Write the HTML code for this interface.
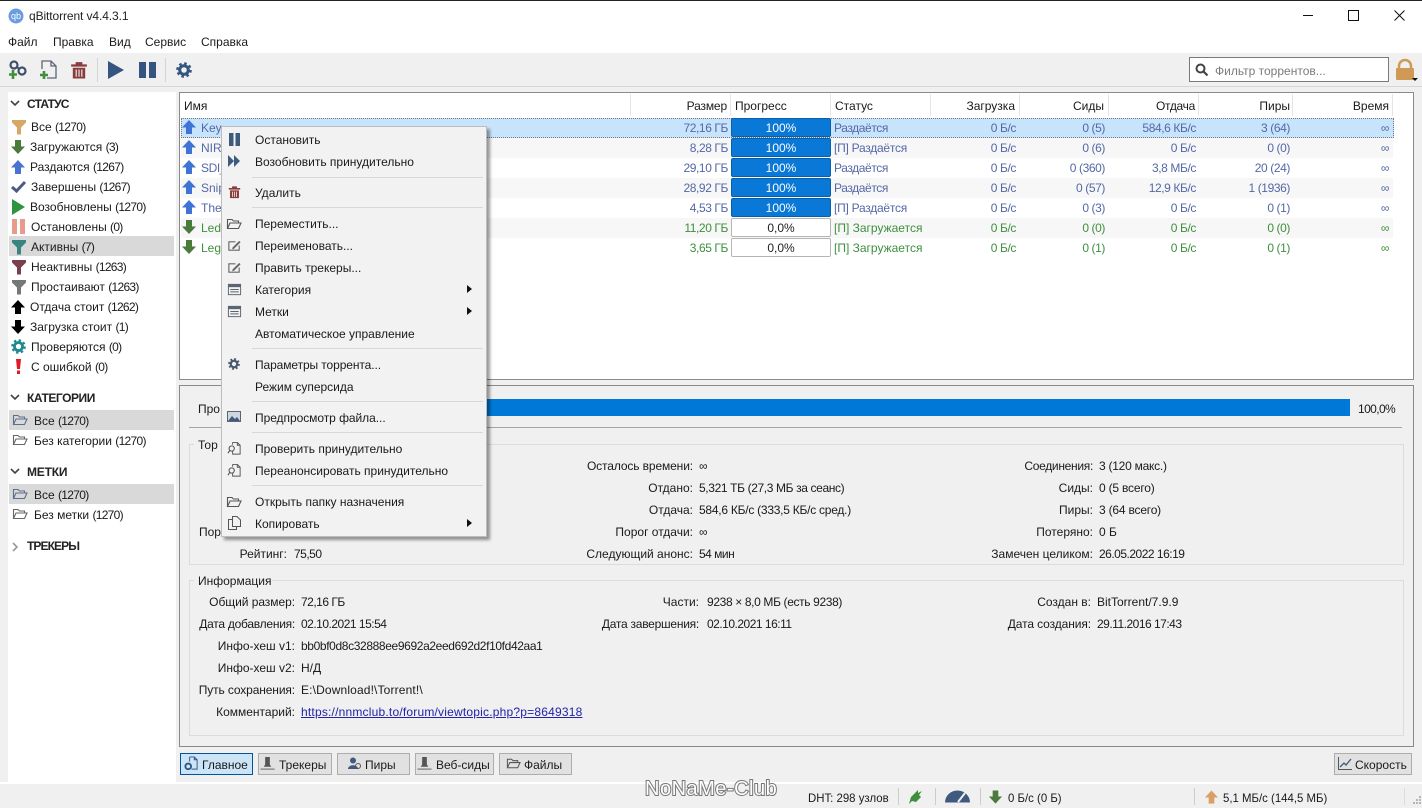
<!DOCTYPE html>
<html><head><meta charset="utf-8"><title>qBittorrent</title>
<style>
html,body{margin:0;padding:0;width:1422px;height:808px;overflow:hidden;background:#f0f0f0}
body{position:relative;font:12px/14px "Liberation Sans","Noto Sans CJK SC",sans-serif;color:#1a1a1a}
.b{position:absolute}
.t{position:absolute;white-space:nowrap;height:14px;line-height:14px}
.r{position:absolute;white-space:nowrap;height:14px;line-height:14px;text-align:right}
svg{position:absolute;overflow:visible}
.h{font-weight:bold;color:#222}
.u{color:#5468a6}.g{color:#3f8f3f}
.r.u,.r.g{letter-spacing:-.4px}
.n{letter-spacing:-.7px}
.d{letter-spacing:-.5px}
.sep{position:absolute;left:252px;width:231px;height:1px;background:#d8d8d8}
.btn{position:absolute;top:753px;height:20px;border:1px solid #adadad;background:#e1e1e1}
.p{position:absolute;left:731px;width:98px;height:17px;border:1px solid #0b5ea8;background:#0a78d7;color:#fff;text-align:center;line-height:18px;border-radius:2px}
.p0{position:absolute;left:731px;width:98px;height:17px;border:1px solid #b5b5b5;background:#fff;color:#222;text-align:center;line-height:18px;border-radius:2px}
</style></head><body>
<svg width="0" height="0" style="position:absolute"><defs>
<symbol id="up" viewBox="0 0 16 16"><path d="M8 1L15 8.5H11V15H5V8.5H1Z"/></symbol>
<symbol id="dn" viewBox="0 0 16 16"><path d="M8 15L15 7.5H11V1H5V7.5H1Z"/></symbol>
<symbol id="fl" viewBox="0 0 16 16"><path d="M1 1H15V3.5L10 8.5V15.500H6V8.500L1 3.500Z"/></symbol>
<symbol id="gr" viewBox="0 0 16 16"><circle cx="8" cy="8" r="4.300" fill="none" stroke="currentColor" stroke-width="3"/><circle cx="8" cy="8" r="6.500" fill="none" stroke="currentColor" stroke-width="2.600" stroke-dasharray="2.550 2.550"/></symbol>
<symbol id="fo" viewBox="0 0 16 16"><path d="M1.500 12.500V3.500H6L7.500 5H12.500V7M1.500 12.500L4 7H15L12.500 12.500Z" fill="none" stroke="currentColor" stroke-width="1.100"/></symbol>
<symbol id="tr" viewBox="0 0 16 16"><path d="M5 1H11V3H15V5H1V3H5ZM2.500 6H13.500V15.500H2.500Z"/><path d="M5.500 7.500V14M8 7.500V14M10.500 7.500V14" stroke="#f0f0f0" stroke-width="1"/></symbol>
<symbol id="ed" viewBox="0 0 16 16"><path d="M13 8V13H2V4H9" fill="none" stroke="#666" stroke-width="1.200"/><path d="M6 10L13 3L14.500 4.500L7.500 11.500L5.500 12Z" fill="#666"/></symbol>
<symbol id="ca" viewBox="0 0 16 16"><rect x="1.500" y="2.500" width="13" height="11" fill="none" stroke="#5a6472"/><rect x="1.500" y="2.500" width="13" height="3" fill="#5a6472"/><path d="M3.500 8H12.500M3.500 10.500H12.500" stroke="#5a6472"/></symbol>
<symbol id="ch" viewBox="0 0 16 16"><path d="M6 1.500H11L14 4.500V14H6V11M11 1.500V4.500H14M6 1.500V4" fill="none" stroke="#555" stroke-width="1"/><circle cx="5" cy="8" r="2.800" fill="none" stroke="#555" stroke-width="1.100"/><path d="M3 10L1 13" stroke="#555" stroke-width="1.200"/></symbol>
<symbol id="pin" viewBox="0 0 16 16"><path d="M5.500 1H10.500V9L12 11.500H4L5.500 9Z" fill="#555"/><path d="M0.500 14H15.500" stroke="#888" stroke-width="1.500"/></symbol>
</defs></svg>

<!-- title bar + menu -->
<div class="b" style="left:0;top:0;width:1422px;height:53px;background:#fff"></div>
<div class="b" style="left:0;top:0;width:1422px;height:1px;background:#222"></div>
<svg style="left:8px;top:8px" width="16" height="16" viewBox="0 0 16 16"><circle cx="8" cy="8" r="7.500" fill="#6a9de0"/><text x="8" y="11" font-size="9" fill="#fff" text-anchor="middle" font-family="Liberation Sans">qb</text></svg>
<div class="t" style="left:29px;top:9px;color:#222;letter-spacing:-.1px">qBittorrent v4.4.3.1</div>
<div class="b" style="left:1303px;top:15px;width:10px;height:1px;background:#111"></div>
<div class="b" style="left:1348px;top:10px;width:9px;height:9px;border:1px solid #111"></div>
<svg style="left:1394px;top:10px" width="11" height="11"><path d="M.5 .5L10.500 10.500M10.500 .5L.5 10.500" stroke="#111" fill="none"/></svg>
<div class="t" style="left:8px;top:35px">Файл</div>
<div class="t" style="left:53px;top:35px">Правка</div>
<div class="t" style="left:109px;top:35px">Вид</div>
<div class="t" style="left:145px;top:35px">Сервис</div>
<div class="t" style="left:201px;top:35px">Справка</div>

<!-- toolbar -->
<div class="b" style="left:0;top:86px;width:1422px;height:1px;background:#d6d6d6"></div>
<svg style="left:8px;top:60px" width="20" height="20" viewBox="0 0 20 20"><circle cx="6" cy="5" r="3.500" fill="none" stroke="#3c4f6b" stroke-width="2.200"/><circle cx="14" cy="11" r="3.500" fill="none" stroke="#3c4f6b" stroke-width="2.200"/><path d="M8 7L12 9" stroke="#3c4f6b" stroke-width="2"/><path d="M5 10V19M1 14.500H9" stroke="#3f8f3f" stroke-width="2.600"/></svg>
<svg style="left:40px;top:60px" width="18" height="20" viewBox="0 0 18 20"><path d="M2 9V1H11L16 6V18H7M11 1V6H16" fill="none" stroke="#5b6675" stroke-width="1.300"/><path d="M4 11V19M0 15H8" stroke="#3f8f3f" stroke-width="2.600"/></svg>
<svg style="left:70px;top:60px;fill:#8a3c3c" width="18" height="20"><use href="#tr"/></svg>
<div class="b" style="left:97px;top:58px;width:1px;height:24px;background:#d4d4d4"></div>
<svg style="left:108px;top:61px" width="16" height="18"><path d="M0 0L16 9L0 18Z" fill="#33557f"/></svg>
<svg style="left:139px;top:62px" width="17" height="16"><path d="M0 0H7V16H0ZM10 0H17V16H10Z" fill="#33557f"/></svg>
<div class="b" style="left:165px;top:58px;width:1px;height:24px;background:#d4d4d4"></div>
<svg style="left:176px;top:62px;color:#33557f" width="16" height="16"><use href="#gr"/></svg>
<div class="b" style="left:1189px;top:57px;width:198px;height:23px;border:1px solid #7a7a7a;background:#fff"></div>
<svg style="left:1195px;top:63px" width="13" height="13"><circle cx="5.500" cy="5.500" r="4" fill="none" stroke="#444" stroke-width="2"/><path d="M8.500 8.500L12.500 12.500" stroke="#444" stroke-width="2.200"/></svg>
<div class="t" style="left:1215px;top:64px;color:#7b7b7b">Фильтр торрентов...</div>
<svg style="left:1395px;top:59px" width="24" height="24"><path d="M4 9V7A6 6 0 0 1 16 7V9" fill="none" stroke="#cf9a55" stroke-width="2.500"/><rect x="1" y="9" width="18" height="12" rx="1" fill="#cf9a55"/><path d="M17 19H23L20 22Z" fill="#111"/></svg>

<!-- left panel -->
<div class="b" style="left:8px;top:92px;width:168px;height:691px;background:#fff"></div>
<div class="b" style="left:9px;top:236px;width:165px;height:20px;background:#d9d9d9"></div>
<div class="b" style="left:9px;top:410px;width:165px;height:20px;background:#d9d9d9"></div>
<div class="b" style="left:9px;top:484px;width:165px;height:20px;background:#d9d9d9"></div>
<svg style="left:10px;top:100px" width="10" height="7"><path d="M1 1L5 5L9 1" fill="none" stroke="#444" stroke-width="1.600"/></svg>
<div class="t h" style="left:27px;top:97px;letter-spacing:-.8px">СТАТУС</div>
<svg style="left:11px;top:119px;fill:#d5a866" width="16" height="16"><use href="#fl"/></svg><div class="t" style="left:31px;top:120px">Все <span class="n">(1270)</span></div>
<svg style="left:10px;top:139px;fill:#4a7a3c" width="16" height="16"><use href="#dn"/></svg><div class="t" style="left:30px;top:140px">Загружаются <span class="n">(3)</span></div>
<svg style="left:10px;top:159px;fill:#4a72d0" width="16" height="16"><use href="#up"/></svg><div class="t" style="left:30px;top:160px">Раздаются <span class="n">(1267)</span></div>
<svg style="left:11px;top:180px" width="15" height="13"><path d="M1 7L5.500 11L14 2" fill="none" stroke="#4f5a85" stroke-width="3"/></svg><div class="t" style="left:31px;top:180px">Завершены <span class="n">(1267)</span></div>
<svg style="left:12px;top:199px" width="13" height="16"><path d="M0 0L13 8L0 16Z" fill="#2f9440"/></svg><div class="t" style="left:30px;top:200px">Возобновлены <span class="n">(1270)</span></div>
<svg style="left:12px;top:219px" width="13" height="15"><path d="M0 0H5V15H0ZM8 0H13V15H8Z" fill="#ea9a8c"/></svg><div class="t" style="left:31px;top:220px">Остановлены <span class="n">(0)</span></div>
<svg style="left:11px;top:239px;fill:#3a8480" width="16" height="16"><use href="#fl"/></svg><div class="t" style="left:31px;top:240px">Активны <span class="n">(7)</span></div>
<svg style="left:11px;top:259px;fill:#7a3f4a" width="16" height="16"><use href="#fl"/></svg><div class="t" style="left:31px;top:260px">Неактивны <span class="n">(1263)</span></div>
<svg style="left:11px;top:279px;fill:#777" width="16" height="16"><use href="#fl"/></svg><div class="t" style="left:31px;top:280px">Простаивают <span class="n">(1263)</span></div>
<svg style="left:10px;top:299px;fill:#000" width="16" height="16"><use href="#up"/></svg><div class="t" style="left:30px;top:300px">Отдача стоит <span class="n">(1262)</span></div>
<svg style="left:10px;top:319px;fill:#000" width="16" height="16"><use href="#dn"/></svg><div class="t" style="left:30px;top:320px">Загрузка стоит <span class="n">(1)</span></div>
<svg style="left:11px;top:339px;color:#1f8a8f" width="15" height="15"><use href="#gr"/></svg><div class="t" style="left:31px;top:340px">Проверяются <span class="n">(0)</span></div>
<svg style="left:16px;top:359px" width="5" height="15"><path d="M0 0H5L4 10H1ZM1 11.500H4V15H1Z" fill="#e01b24"/></svg><div class="t" style="left:31px;top:360px">С ошибкой <span class="n">(0)</span></div>
<svg style="left:10px;top:394px" width="10" height="7"><path d="M1 1L5 5L9 1" fill="none" stroke="#444" stroke-width="1.600"/></svg>
<div class="t h" style="left:27px;top:391px;letter-spacing:-.45px">КАТЕГОРИИ</div>
<svg style="left:12px;top:412px;color:#5a6f8f" width="16" height="16"><use href="#fo"/></svg><div class="t" style="left:34px;top:414px">Все <span class="n">(1270)</span></div>
<svg style="left:12px;top:432px;color:#666" width="16" height="16"><use href="#fo"/></svg><div class="t" style="left:34px;top:434px">Без категории <span class="n">(1270)</span></div>
<svg style="left:10px;top:468px" width="10" height="7"><path d="M1 1L5 5L9 1" fill="none" stroke="#444" stroke-width="1.600"/></svg>
<div class="t h" style="left:27px;top:465px;letter-spacing:-.2px">МЕТКИ</div>
<svg style="left:12px;top:486px;color:#5a6f8f" width="16" height="16"><use href="#fo"/></svg><div class="t" style="left:34px;top:488px">Все <span class="n">(1270)</span></div>
<svg style="left:12px;top:506px;color:#666" width="16" height="16"><use href="#fo"/></svg><div class="t" style="left:34px;top:508px">Без метки <span class="n">(1270)</span></div>
<svg style="left:12px;top:542px" width="7" height="10"><path d="M1 1L5 5L1 9" fill="none" stroke="#999" stroke-width="1.600"/></svg>
<div class="t h" style="left:27px;top:539px;letter-spacing:-.9px">ТРЕКЕРЫ</div>

<!-- torrent list -->
<div class="b" style="left:179px;top:92px;width:1233px;height:286px;border:1px solid #8a8a8a;background:#fff"></div>
<div class="b" style="left:630px;top:94px;width:1px;height:22px;background:#e5e5e5"></div>
<div class="b" style="left:730px;top:94px;width:1px;height:22px;background:#e5e5e5"></div>
<div class="b" style="left:830px;top:94px;width:1px;height:22px;background:#e5e5e5"></div>
<div class="b" style="left:930px;top:94px;width:1px;height:22px;background:#e5e5e5"></div>
<div class="b" style="left:1019px;top:94px;width:1px;height:22px;background:#e5e5e5"></div>
<div class="b" style="left:1108px;top:94px;width:1px;height:22px;background:#e5e5e5"></div>
<div class="b" style="left:1198px;top:94px;width:1px;height:22px;background:#e5e5e5"></div>
<div class="b" style="left:1292px;top:94px;width:1px;height:22px;background:#e5e5e5"></div>
<div class="b" style="left:1392px;top:94px;width:1px;height:22px;background:#e5e5e5"></div>
<div class="t" style="left:184px;top:99px">Имя</div>
<div class="r" style="right:695px;top:99px;letter-spacing:-.15px">Размер</div>
<div class="t" style="left:735px;top:99px">Прогресс</div>
<div class="t" style="left:835px;top:99px">Статус</div>
<div class="r" style="right:407px;top:99px">Загрузка</div>
<div class="r" style="right:318px;top:99px">Сиды</div>
<div class="r" style="right:227px;top:99px;letter-spacing:-.3px">Отдача</div>
<div class="r" style="right:132px;top:99px">Пиры</div>
<div class="r" style="right:33px;top:99px">Время</div>

<div class="b" style="left:181px;top:118px;width:1211px;height:18px;background:#c8e4fc;border:1px dotted #777"></div>
<div class="b" style="left:181px;top:138px;width:1212px;height:20px;background:#f7f7f7"></div>
<div class="b" style="left:181px;top:178px;width:1212px;height:20px;background:#f7f7f7"></div>
<div class="b" style="left:181px;top:218px;width:1212px;height:20px;background:#f7f7f7"></div>

<svg style="left:181px;top:119px;fill:#3f73d6" width="16" height="16"><use href="#up"/></svg>
<svg style="left:181px;top:139px;fill:#3f73d6" width="16" height="16"><use href="#up"/></svg>
<svg style="left:181px;top:159px;fill:#3f73d6" width="16" height="16"><use href="#up"/></svg>
<svg style="left:181px;top:179px;fill:#3f73d6" width="16" height="16"><use href="#up"/></svg>
<svg style="left:181px;top:199px;fill:#3f73d6" width="16" height="16"><use href="#up"/></svg>
<svg style="left:181px;top:219px;fill:#4a7a3c" width="16" height="16"><use href="#dn"/></svg>
<svg style="left:181px;top:239px;fill:#4a7a3c" width="16" height="16"><use href="#dn"/></svg>
<div class="t u" style="left:201px;top:121px">Key</div>
<div class="t u" style="left:201px;top:141px">NIR</div>
<div class="t u" style="left:201px;top:161px;letter-spacing:-.4px">SDI_</div>
<div class="t u" style="left:201px;top:181px">Snip</div>
<div class="t u" style="left:201px;top:201px">The</div>
<div class="t g" style="left:201px;top:221px">Led</div>
<div class="t g" style="left:201px;top:241px">Leg</div>

<div class="r u" style="right:694px;top:121px">72,16 ГБ</div>
<div class="r u" style="right:694px;top:141px">8,28 ГБ</div>
<div class="r u" style="right:694px;top:161px">29,10 ГБ</div>
<div class="r u" style="right:694px;top:181px">28,92 ГБ</div>
<div class="r u" style="right:694px;top:201px">4,53 ГБ</div>
<div class="r g" style="right:694px;top:221px">11,20 ГБ</div>
<div class="r g" style="right:694px;top:241px">3,65 ГБ</div>

<div class="p" style="top:118px">100%</div>
<div class="p" style="top:138px">100%</div>
<div class="p" style="top:158px">100%</div>
<div class="p" style="top:178px">100%</div>
<div class="p" style="top:198px">100%</div>
<div class="p0" style="top:218px">0,0%</div>
<div class="p0" style="top:238px">0,0%</div>

<div class="t u" style="left:834px;top:121px;letter-spacing:-.4px">Раздаётся</div>
<div class="t u" style="left:834px;top:141px;letter-spacing:-.25px">[П] Раздаётся</div>
<div class="t u" style="left:834px;top:161px;letter-spacing:-.4px">Раздаётся</div>
<div class="t u" style="left:834px;top:181px;letter-spacing:-.4px">Раздаётся</div>
<div class="t u" style="left:834px;top:201px;letter-spacing:-.25px">[П] Раздаётся</div>
<div class="t g" style="left:834px;top:221px">[П] Загружается</div>
<div class="t g" style="left:834px;top:241px">[П] Загружается</div>

<div class="r u" style="right:406px;top:121px">0 Б/с</div>
<div class="r u" style="right:406px;top:141px">0 Б/с</div>
<div class="r u" style="right:406px;top:161px">0 Б/с</div>
<div class="r u" style="right:406px;top:181px">0 Б/с</div>
<div class="r u" style="right:406px;top:201px">0 Б/с</div>
<div class="r g" style="right:406px;top:221px">0 Б/с</div>
<div class="r g" style="right:406px;top:241px">0 Б/с</div>

<div class="r u" style="right:317px;top:121px">0 (5)</div>
<div class="r u" style="right:317px;top:141px">0 (6)</div>
<div class="r u" style="right:317px;top:161px">0 (360)</div>
<div class="r u" style="right:317px;top:181px">0 (57)</div>
<div class="r u" style="right:317px;top:201px">0 (3)</div>
<div class="r g" style="right:317px;top:221px">0 (0)</div>
<div class="r g" style="right:317px;top:241px">0 (1)</div>

<div class="r u" style="right:226px;top:121px">584,6 КБ/с</div>
<div class="r u" style="right:226px;top:141px">0 Б/с</div>
<div class="r u" style="right:226px;top:161px">3,8 МБ/с</div>
<div class="r u" style="right:226px;top:181px">12,9 КБ/с</div>
<div class="r u" style="right:226px;top:201px">0 Б/с</div>
<div class="r g" style="right:226px;top:221px">0 Б/с</div>
<div class="r g" style="right:226px;top:241px">0 Б/с</div>

<div class="r u" style="right:132px;top:121px">3 (64)</div>
<div class="r u" style="right:132px;top:141px">0 (0)</div>
<div class="r u" style="right:132px;top:161px">20 (24)</div>
<div class="r u" style="right:132px;top:181px">1 (1936)</div>
<div class="r u" style="right:132px;top:201px">0 (1)</div>
<div class="r g" style="right:132px;top:221px">0 (0)</div>
<div class="r g" style="right:132px;top:241px">0 (1)</div>

<div class="r u" style="right:33px;top:121px">∞</div>
<div class="r u" style="right:33px;top:141px">∞</div>
<div class="r u" style="right:33px;top:161px">∞</div>
<div class="r u" style="right:33px;top:181px">∞</div>
<div class="r u" style="right:33px;top:201px">∞</div>
<div class="r g" style="right:33px;top:221px">∞</div>
<div class="r g" style="right:33px;top:241px">∞</div>

<!-- lower panel -->
<div class="b" style="left:179px;top:385px;width:1233px;height:360px;border:1px solid #8a8a8a;background:#f0f0f0"></div>
<div class="t" style="left:198px;top:402px">Про</div>
<div class="b" style="left:486px;top:399px;width:864px;height:17px;background:#0078d7"></div>
<div class="t" style="left:1358px;top:402px;letter-spacing:-.6px">100,0%</div>
<div class="b" style="left:189px;top:427px;width:1213px;height:1px;background:#a5a5a5"></div>
<div class="b" style="left:189px;top:444px;width:1213px;height:119px;border:1px solid #dcdcdc"></div>
<div class="b" style="left:194px;top:438px;width:30px;height:14px;background:#f0f0f0"></div>
<div class="t" style="left:198px;top:438px">Тор</div>
<div class="t" style="left:199px;top:525px">Пор</div>
<div class="r" style="right:1135px;top:547px">Рейтинг:</div><div class="t d" style="left:294px;top:547px">75,50</div>

<div class="r" style="right:729px;top:459px;letter-spacing:-.12px">Осталось времени:</div><div class="t" style="left:699px;top:459px">∞</div>
<div class="r" style="right:729px;top:481px">Отдано:</div><div class="t" style="left:699px;top:481px;letter-spacing:-.37px">5,321 ТБ (27,3 МБ за сеанс)</div>
<div class="r" style="right:729px;top:503px">Отдача:</div><div class="t" style="left:699px;top:503px;letter-spacing:-.25px">584,6 КБ/с (333,5 КБ/с сред.)</div>
<div class="r" style="right:729px;top:525px">Порог отдачи:</div><div class="t" style="left:699px;top:525px">∞</div>
<div class="r" style="right:729px;top:547px">Следующий анонс:</div><div class="t" style="left:699px;top:547px;letter-spacing:-.5px">54 мин</div>

<div class="r" style="right:329px;top:459px;letter-spacing:-.3px">Соединения:</div><div class="t" style="left:1099px;top:459px;letter-spacing:-.25px">3 (120 макс.)</div>
<div class="r" style="right:329px;top:481px">Сиды:</div><div class="t" style="left:1099px;top:481px;letter-spacing:-.2px">0 (5 всего)</div>
<div class="r" style="right:329px;top:503px">Пиры:</div><div class="t" style="left:1099px;top:503px;letter-spacing:-.2px">3 (64 всего)</div>
<div class="r" style="right:329px;top:525px">Потеряно:</div><div class="t" style="left:1099px;top:525px">0 Б</div>
<div class="r" style="right:329px;top:547px">Замечен целиком:</div><div class="t d" style="left:1099px;top:547px">26.05.2022 16:19</div>

<div class="b" style="left:189px;top:580px;width:1213px;height:154px;border:1px solid #dcdcdc"></div>
<div class="b" style="left:194px;top:574px;width:78px;height:14px;background:#f0f0f0"></div>
<div class="t" style="left:198px;top:574px">Информация</div>
<div class="r" style="right:1127px;top:595px;letter-spacing:-.05px">Общий размер:</div><div class="t d" style="left:301px;top:595px">72,16 ГБ</div>
<div class="r" style="right:1127px;top:617px;letter-spacing:-.25px">Дата добавления:</div><div class="t d" style="left:301px;top:617px">02.10.2021 15:54</div>
<div class="r" style="right:1127px;top:639px">Инфо-хеш v1:</div><div class="t" style="left:301px;top:639px;letter-spacing:-.37px">bb0bf0d8c32888ee9692a2eed692d2f10fd42aa1</div>
<div class="r" style="right:1127px;top:661px">Инфо-хеш v2:</div><div class="t" style="left:301px;top:661px">Н/Д</div>
<div class="r" style="right:1127px;top:683px;letter-spacing:-.12px">Путь сохранения:</div><div class="t" style="left:301px;top:683px;letter-spacing:.14px">E:\Download!\Torrent!\</div>
<div class="r" style="right:1127px;top:705px">Комментарий:</div><div class="t" style="left:301px;top:705px;color:#2222aa;text-decoration:underline;letter-spacing:.2px">https://nnmclub.to/forum/viewtopic.php?p=8649318</div>

<div class="r" style="right:723px;top:595px">Части:</div><div class="t" style="left:707px;top:595px;letter-spacing:-.36px">9238 × 8,0 МБ (есть 9238)</div>
<div class="r" style="right:723px;top:617px;letter-spacing:-.25px">Дата завершения:</div><div class="t d" style="left:707px;top:617px">02.10.2021 16:11</div>
<div class="r" style="right:331px;top:595px">Создан в:</div><div class="t" style="left:1097px;top:595px">BitTorrent/7.9.9</div>
<div class="r" style="right:331px;top:617px;letter-spacing:-.1px">Дата создания:</div><div class="t d" style="left:1097px;top:617px">29.11.2016 17:43</div>

<!-- context menu -->
<div class="b" style="left:221px;top:126px;width:264px;height:409px;background:#f2f2f2;border:1px solid #bdbdbd;box-shadow:3px 3px 3px rgba(0,0,0,.4);z-index:5">
<div style="position:absolute;left:-222px;top:-127px;width:1422px;height:808px">
<svg style="left:229px;top:133px" width="11" height="13"><path d="M0 0H4.500V13H0ZM6.500 0H11V13H6.500Z" fill="#3f5a7f"/></svg>
<div class="t" style="left:255px;top:133px">Остановить</div>
<svg style="left:228px;top:155px" width="12" height="12"><path d="M0 0L6 6L0 12ZM6 0L12 6L6 12Z" fill="#3f5a7f"/></svg>
<div class="t" style="left:255px;top:155px">Возобновить принудительно</div>
<div class="sep" style="top:177px"></div>
<svg style="left:228px;top:185px;fill:#8a3c3c" width="13" height="14"><use href="#tr"/></svg>
<div class="t" style="left:255px;top:186px">Удалить</div>
<div class="sep" style="top:207px"></div>
<svg style="left:226px;top:216px;color:#555" width="16" height="16"><use href="#fo"/></svg>
<div class="t" style="left:255px;top:217px">Переместить...</div>
<svg style="left:227px;top:238px" width="15" height="15"><use href="#ed"/></svg>
<div class="t" style="left:255px;top:239px">Переименовать...</div>
<svg style="left:227px;top:260px" width="15" height="15"><use href="#ed"/></svg>
<div class="t" style="left:255px;top:261px">Править трекеры...</div>
<svg style="left:227px;top:282px" width="15" height="15"><use href="#ca"/></svg>
<div class="t" style="left:255px;top:283px">Категория</div>
<svg style="left:467px;top:285px" width="5" height="8"><path d="M0 0L5 4L0 8Z" fill="#111"/></svg>
<svg style="left:227px;top:304px" width="15" height="15"><use href="#ca"/></svg>
<div class="t" style="left:255px;top:305px">Метки</div>
<svg style="left:467px;top:307px" width="5" height="8"><path d="M0 0L5 4L0 8Z" fill="#111"/></svg>
<div class="t" style="left:255px;top:327px">Автоматическое управление</div>
<div class="sep" style="top:348px"></div>
<svg style="left:228px;top:358px;color:#4a5a70" width="12" height="12"><use href="#gr"/></svg>
<div class="t" style="left:255px;top:358px;letter-spacing:-.1px">Параметры торрента...</div>
<div class="t" style="left:255px;top:380px">Режим суперсида</div>
<div class="sep" style="top:401px"></div>
<svg style="left:227px;top:411px" width="14" height="12"><rect x=".5" y=".5" width="13" height="10" fill="#cfd6df" stroke="#5a6472"/><path d="M1 10L5 5L8 8L10 6L13 10Z" fill="#3f5a7f"/></svg>
<div class="t" style="left:255px;top:411px;letter-spacing:-.05px">Предпросмотр файла...</div>
<div class="sep" style="top:432px"></div>
<svg style="left:227px;top:441px" width="15" height="15"><use href="#ch"/></svg>
<div class="t" style="left:255px;top:442px">Проверить принудительно</div>
<svg style="left:227px;top:463px" width="15" height="15"><use href="#ch"/></svg>
<div class="t" style="left:255px;top:464px">Переанонсировать принудительно</div>
<div class="sep" style="top:485px"></div>
<svg style="left:226px;top:494px;color:#555" width="16" height="16"><use href="#fo"/></svg>
<div class="t" style="left:255px;top:495px">Открыть папку назначения</div>
<svg style="left:228px;top:516px" width="13" height="14"><path d="M4.500 .5H9L12.500 4V10.500H4.500ZM4.500 3.500H.5V13.500H8.500V10.500" fill="none" stroke="#555"/></svg>
<div class="t" style="left:255px;top:517px">Копировать</div>
<svg style="left:467px;top:519px" width="5" height="8"><path d="M0 0L5 4L0 8Z" fill="#111"/></svg>
</div></div>

<!-- bottom tabs -->
<div class="btn" style="left:180px;width:71px;background:#cce4f7;border-color:#005499"></div>
<svg style="left:184px;top:756px" width="15" height="15" viewBox="0 0 16 16"><path d="M6 1H11L14 4V14H8M6 1V6M11 1V4H14" fill="none" stroke="#33557f"/><circle cx="4.500" cy="11" r="3" fill="none" stroke="#33557f" stroke-width="2"/></svg>
<div class="t" style="left:202px;top:758px">Главное</div>
<div class="btn" style="left:258px;width:72px"></div>
<svg style="left:260px;top:756px" width="15" height="15"><use href="#pin"/></svg>
<div class="t" style="left:279px;top:758px">Трекеры</div>
<div class="btn" style="left:337px;width:71px"></div>
<svg style="left:348px;top:757px" width="14" height="13"><circle cx="5" cy="3.500" r="3" fill="#3f5a7f"/><path d="M0 12C0 7 10 7 10 12Z" fill="#3f5a7f"/><circle cx="10" cy="9" r="2.500" fill="none" stroke="#555"/></svg>
<div class="t" style="left:365px;top:758px">Пиры</div>
<div class="btn" style="left:415px;width:77px"></div>
<svg style="left:417px;top:756px" width="15" height="15"><use href="#pin"/></svg>
<div class="t" style="left:436px;top:758px">Веб-сиды</div>
<div class="btn" style="left:499px;width:71px"></div>
<svg style="left:506px;top:756px;color:#555" width="15" height="15"><use href="#fo"/></svg>
<div class="t" style="left:524px;top:758px">Файлы</div>
<div class="btn" style="left:1334px;width:76px"></div>
<svg style="left:1338px;top:757px" width="14" height="13"><path d="M.5 0V12.500H14" fill="none" stroke="#555"/><path d="M2 10L6 6L8 8L13 2" fill="none" stroke="#3f5a7f" stroke-width="1.300"/></svg>
<div class="t" style="left:1355px;top:758px">Скорость</div>

<!-- status bar -->
<div class="b" style="left:0;top:782px;width:1422px;height:2px;background:#fff"></div>
<div class="t" style="left:645px;top:779px;height:20px;line-height:20px;font-size:20px;letter-spacing:.5px;color:#fff;-webkit-text-stroke:2px #777;paint-order:stroke fill">NoNaMe-Club</div>
<div class="t" style="left:808px;top:791px;transform-origin:0 50%;transform:scaleX(.95)">DHT: 298 узлов</div>
<div class="b" style="left:898px;top:788px;width:1px;height:17px;background:#ccc"></div>
<svg style="left:908px;top:789px" width="15" height="16"><path d="M3 8L8 3L10 1L10 4L14 2L11 6L13 8L8 13L4 12L1 15Z" fill="#3f8f3f"/></svg>
<div class="b" style="left:935px;top:788px;width:1px;height:17px;background:#ccc"></div>
<svg style="left:945px;top:790px" width="25" height="13"><path d="M0 12.500A12.500 12 0 0 1 25 12.500Z" fill="#3f5a7f"/><path d="M13 12L20 3" stroke="#f0f0f0" stroke-width="2"/></svg>
<div class="b" style="left:980px;top:788px;width:1px;height:17px;background:#ccc"></div>
<svg style="left:988px;top:789px;fill:#4a7a3c" width="15" height="16"><use href="#dn"/></svg>
<div class="t" style="left:1008px;top:791px;transform-origin:0 50%;transform:scaleX(.95)">0 Б/с (0 Б)</div>
<div class="b" style="left:1194px;top:788px;width:1px;height:17px;background:#ccc"></div>
<svg style="left:1204px;top:789px;fill:#d9a066" width="15" height="16"><use href="#up"/></svg>
<div class="t" style="left:1223px;top:791px;transform-origin:0 50%;transform:scaleX(.95)">5,1 МБ/с (144,5 МБ)</div>
<div class="b" style="left:1404px;top:788px;width:1px;height:17px;background:#ddd"></div>
<svg style="left:1413px;top:796px" width="8" height="9"><path d="M6 0h2v2H6zM3 3h2v2H3zM6 3h2v2H6zM0 6h2v2H0zM3 6h2v2H3zM6 6h2v2H6z" fill="#b5b5b5"/></svg>
</body></html>
